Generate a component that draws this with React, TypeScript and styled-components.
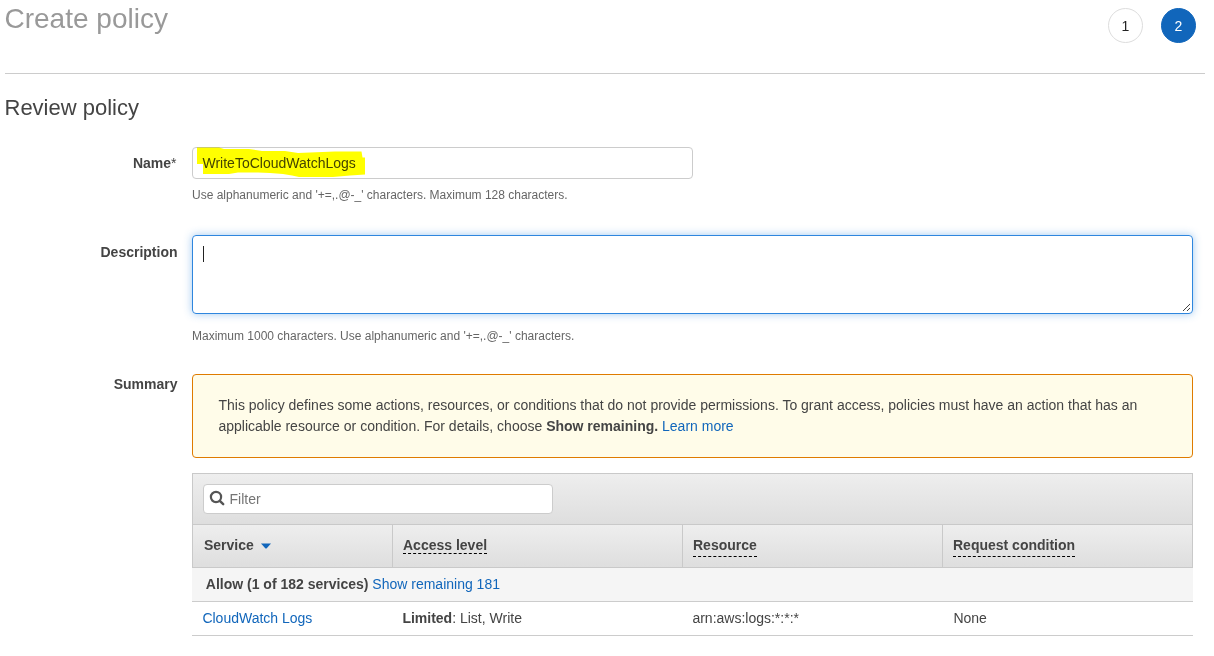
import React from "react";
import styled, { createGlobalStyle } from "styled-components";

const GlobalStyle = createGlobalStyle`
  *, *::before, *::after { box-sizing: border-box; }
  body {
    margin: 0;
    background: #fff;
    color: #444;
    font: 14px/21px "Liberation Sans", Arial, sans-serif;
  }
`;

const Page = styled.main`
  width: 1200px;
  margin-left: 5px;
`;

const Header = styled.header`
  display: flex;
  justify-content: space-between;
  height: 74px;
  border-bottom: 1px solid #ccc;
`;

const Title = styled.h1`
  margin: 2px 0 0 -0.5px;
  font-size: 28px;
  line-height: 34px;
  font-weight: 400;
  color: #999;
`;

const Steps = styled.nav`
  display: flex;
  gap: 18px;
  padding: 8px 9px 0 0;
`;

const Step = styled.span<{ $active?: boolean }>`
  display: flex;
  align-items: center;
  justify-content: center;
  width: 35px;
  height: 35px;
  padding-top: 1px;
  border-radius: 50%;
  border: 1px solid ${(p) => (p.$active ? "#1166bb" : "#ddd")};
  background: ${(p) => (p.$active ? "#1166bb" : "#fff")};
  color: ${(p) => (p.$active ? "#fff" : "#222")};
`;

const SectionTitle = styled.h2`
  margin: 19px 0 25px -0.5px;
  font-size: 22px;
  line-height: 29px;
  font-weight: 400;
`;

const Field = styled.div<{ $gap?: number }>`
  display: grid;
  grid-template-columns: 172px 1001px;
  column-gap: 15px;
  margin-bottom: ${(p) => p.$gap ?? 0}px;
`;

const Label = styled.label<{ $top: number }>`
  padding-top: ${(p) => p.$top}px;
  text-align: right;
  font-weight: 700;
  margin-right: -0.5px;
`;

const Required = styled.span`
  font-weight: 400;
  margin-right: 1px;
`;

const NameInput = styled.div`
  position: relative;
  width: 501px;
  height: 32px;
  padding: 5px 9.5px;
  line-height: 20px;
  border: 1px solid #ccc;
  border-radius: 4px;
`;

const Marker = styled.svg`
  position: absolute;
  left: 3px;
  top: -2px;
  mix-blend-mode: multiply;
`;

const Hint = styled.p<{ $top: number }>`
  margin: ${(p) => p.$top}px 0 0;
  font-size: 12px;
  line-height: 18px;
  color: #666;
`;

const DescriptionBox = styled.div`
  display: flex;
  justify-content: space-between;
  height: 79px;
  padding: 10px 1px 0 10px;
  border: 1px solid #2e86de;
  border-radius: 4px;
  box-shadow: 0 0 8px rgba(46, 134, 222, 0.45);
`;

const TextCaret = styled.span`
  width: 1px;
  height: 16px;
  background: #222;
`;

const Grip = styled.svg`
  align-self: flex-end;
`;

const Alert = styled.div`
  height: 84px;
  padding: 20px 26px 0 25.5px;
  border: 1px solid #df7b00;
  border-radius: 4px;
  background: #fffce9;
`;

const Link = styled.a`
  color: #1166bb;
`;

const Table = styled.section`
  margin-top: 15px;
`;

const FilterBar = styled.div`
  height: 51px;
  padding: 10px;
  border: 1px solid #c9c9c9;
  border-bottom: 0;
  background: linear-gradient(#eee, #dedede);
`;

const FilterInput = styled.div`
  display: flex;
  align-items: center;
  gap: 4.5px;
  width: 350px;
  height: 30px;
  padding-left: 5px;
  border: 1px solid #ccc;
  border-radius: 4px;
  background: #fff;
  color: #757575;
`;

const SearchIcon = styled.svg`
  margin-bottom: 2px;
`;

const HeadRow = styled.div`
  display: grid;
  grid-template-columns: 200px 290px 260px 1fr;
  height: 44px;
  border: 1px solid #c9c9c9;
  background: linear-gradient(#eee, #dedede);
`;

const HeadCell = styled.div`
  display: flex;
  align-items: flex-start;
  padding: 10px 0 0 11px;
  font-weight: 700;
  & + & {
    padding-left: 10px;
    margin-left: -1px;
    border-left: 1px solid #c9c9c9;
  }
`;

const Term = styled.span<{ $height: number }>`
  height: ${(p) => p.$height}px;
  border-bottom: 1px dashed #000;
`;

const SortIcon = styled.svg`
  margin: 8px 0 0 7px;
`;

const GroupRow = styled.div`
  height: 34px;
  padding: 6px 0 0 13.8px;
  border-bottom: 1px solid #ccc;
  background: #f5f5f5;
`;

const DataRow = styled.div`
  display: grid;
  grid-template-columns: 200px 290px 261px 1fr;
  height: 34px;
  padding: 6px 0 0 10.4px;
  border-bottom: 1px solid #ccc;
`;

export default function App() {
  return (
    <>
      <GlobalStyle />
      <Page>
        <Header>
          <Title>Create policy</Title>
          <Steps>
            <Step>1</Step>
            <Step $active>2</Step>
          </Steps>
        </Header>
        <SectionTitle>Review policy</SectionTitle>
        <Field $gap={31}>
          <Label $top={6}>
            Name<Required>*</Required>
          </Label>
          <div>
            <NameInput>
              WriteToCloudWatchLogs
              <Marker width="170" height="32" viewBox="196 146 170 32">
                <path
                  fill="#ff0"
                  d="M197 147.5H219L224 149H249L262 151H285L298 153L310 152.5L335 151.5H361.500L362.500 157.500H365V174.500L350 175.500L333 177H299L292 175.500L283 174L270 173L258 172.500H238L229 174H203V164H197Z"
                />
              </Marker>
            </NameInput>
            <Hint $top={7}>Use alphanumeric and '+=,.@-_' characters. Maximum 128 characters.</Hint>
          </div>
        </Field>
        <Field $gap={29}>
          <Label $top={7}>Description</Label>
          <div>
            <DescriptionBox>
              <TextCaret />
              <Grip width="9" height="10" viewBox="0 0 9 10" shapeRendering="crispEdges">
                <path d="M0.500 8.500L8 1M4.500 8.500L8 5" stroke="#444" />
              </Grip>
            </DescriptionBox>
            <Hint $top={13}>Maximum 1000 characters. Use alphanumeric and '+=,.@-_' characters.</Hint>
          </div>
        </Field>
        <Field>
          <Label $top={0}>Summary</Label>
          <div>
            <Alert>
              This policy defines some actions, resources, or conditions that do not provide permissions. To grant
              access, policies must have an action that has an applicable resource or condition. For details, choose{" "}
              <b>Show remaining.</b> <Link>Learn more</Link>
            </Alert>
            <Table>
              <FilterBar>
                <FilterInput>
                  <SearchIcon width="16" height="16" viewBox="0 0 16 16" fill="none" stroke="#555">
                    <circle cx="7" cy="7" r="5.100" strokeWidth="2.200" />
                    <path d="M10.800 10.800L14.200 14.200" strokeWidth="2.400" strokeLinecap="round" />
                  </SearchIcon>
                  Filter
                </FilterInput>
              </FilterBar>
              <HeadRow>
                <HeadCell>
                  Service
                  <SortIcon width="10" height="6" viewBox="0 0 10 6">
                    <path d="M0 0.500H10L5.500 5.500H4.500Z" fill="#1166bb" />
                  </SortIcon>
                </HeadCell>
                <HeadCell>
                  <Term $height={19}>Access level</Term>
                </HeadCell>
                <HeadCell>
                  <Term $height={22}>Resource</Term>
                </HeadCell>
                <HeadCell>
                  <Term $height={22}>Request condition</Term>
                </HeadCell>
              </HeadRow>
              <GroupRow>
                <b>Allow (1 of 182 services)</b> <Link>Show remaining 181</Link>
              </GroupRow>
              <DataRow>
                <Link>CloudWatch Logs</Link>
                <span>
                  <b>Limited</b>: List, Write
                </span>
                <span>arn:aws:logs:*:*:*</span>
                <span>None</span>
              </DataRow>
            </Table>
          </div>
        </Field>
      </Page>
    </>
  );
}
